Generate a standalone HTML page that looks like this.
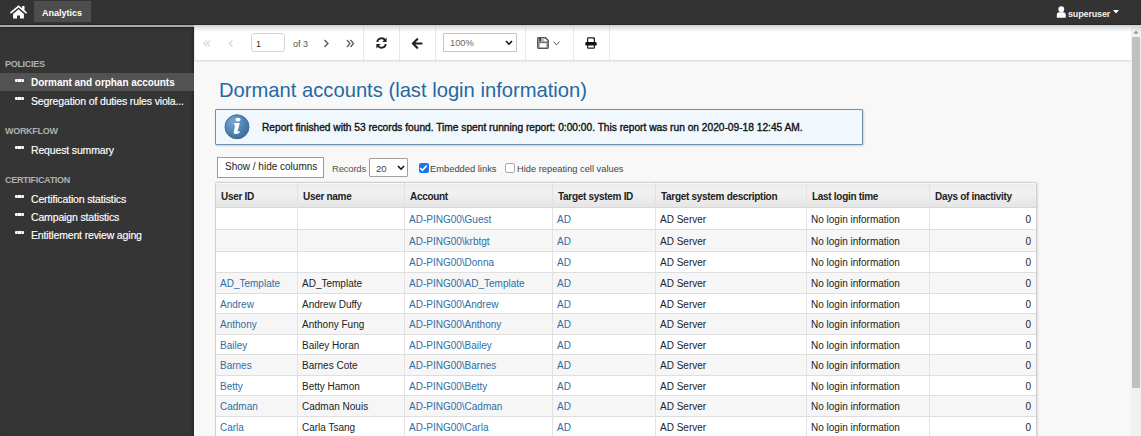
<!DOCTYPE html>
<html><head><meta charset="utf-8">
<style>
*{box-sizing:border-box;margin:0;padding:0}
html,body{width:1141px;height:436px;overflow:hidden;font-family:"Liberation Sans",sans-serif;background:#f8f8f8;position:relative}
div{position:absolute;white-space:nowrap}
#hdr{left:0;top:0;width:1141px;height:25px;background:#333;box-shadow:inset 0 -1px 1px #262626;z-index:5}
#hshadow{left:194px;top:25px;width:947px;height:7px;background:linear-gradient(rgba(0,0,0,.16),rgba(0,0,0,0));z-index:6}
#home{position:absolute;left:10px;top:5px}
#tab{left:34px;top:1px;width:57px;height:21px;background:#4d4d4d;color:#fff;font-weight:bold;font-size:9px;line-height:24px;padding-left:8px}
#user{left:1068px;top:2px;height:25px;line-height:25px;color:#f0f0f0;font-size:9px;letter-spacing:-0.15px;font-weight:bold}
#side{left:0;top:25px;width:194px;height:411px;background:#353535;border-top:2px solid #a9a9a9;z-index:4}
#sidein{left:0;top:0;width:194px;height:409px;box-shadow:inset 0 1px 1px #262626, inset -2px 0 2px rgba(0,0,0,.18)}
.sh{left:5px;color:#b0b0b0;font-weight:bold;font-size:9px;letter-spacing:-0.3px;line-height:10px;margin-top:-1px;z-index:5}
.si{left:0;width:194px;height:18px;color:#fff;font-size:10.5px;letter-spacing:-0.15px;-webkit-text-stroke:0.15px #fff;z-index:5}
.si span{position:absolute;left:31px;top:1px;line-height:18px}
.si.sel{background:#525252}
.si.sel span{font-weight:bold;font-size:10px;letter-spacing:-0.05px;-webkit-text-stroke:0}
.si i{position:absolute;left:14.5px;top:6px;width:9.5px;height:3px;border-radius:1px;background:repeating-linear-gradient(90deg,#fff 0 2.4px,#c8c0d0 2.4px 3.4px)}
#tb{left:194px;top:27px;width:937px;height:34px;background:#fff;border-bottom:1px solid #e0e0e0;border-left:1px solid #e6e6e6;box-shadow:0 1px 1px rgba(0,0,0,.05)}
.dv{top:27px;width:1px;height:33px;background:#e8e8e8}
#title{left:219px;top:78px;font-size:20.2px;line-height:24px;color:#1f6aa5}
#info{left:215px;top:109px;width:648px;height:36px;background:#f0f7fd;border:1px solid #6e8fae;border-radius:1px;box-shadow:1px 1px 2px rgba(0,0,0,.18)}
#itxt{left:262px;top:121px;font-size:10.2px;line-height:13px;color:#111;-webkit-text-stroke:0.35px #111}
#btn{left:217px;top:157px;width:107px;height:21px;background:#fff;border:1px solid #9a9a9a;font-size:10px;line-height:17px;padding-left:7px;color:#222}
#rec{left:332px;top:162px;font-size:9.5px;letter-spacing:-0.2px;line-height:13px;color:#555}
#rsel{left:369px;top:158px;width:39px;height:19px;background:#fff;border:1px solid #a0a0a0;border-radius:1px;font-size:9.6px;line-height:20px;padding-left:6px;color:#444}
.cb{top:163px;width:10px;height:10px;border-radius:2px}
#cb1{left:418.5px;background:#1a76f0}
#cb2{left:505px;background:#fff;border:1px solid #a8a8a8}
#emb{left:430px;top:163px;font-size:9.35px;line-height:13px;color:#444}
#hide{left:517px;top:163px;font-size:9.3px;line-height:13px;color:#444}
#tbg{background:#fff;border:1px solid #d0d0d0;border-radius:2px 2px 0 0;box-shadow:1px 0 2px rgba(0,0,0,.12)}
#thd{background:linear-gradient(#ececec,#f1f1f1 40%,#e5e5e5);border-top:1px solid #fafafa}
.stripe{background:#f6f6f6}
.hl{height:1px;background:#dedede}
.hl.hb{background:#d6d6d6}
.vl{width:1px;background:#e2e2e2}
.th{font-size:10px;letter-spacing:-0.3px;font-weight:bold;color:#222;margin-top:2px}
.td{font-size:10px;color:#222;margin-top:1px}
.td.lk{color:#2f6da6}
#sb{left:1131px;top:27px;width:10px;height:409px;background:#f1f1f1}
#sbt{left:1px;top:10px;width:8px;height:351px;background:#c0c0c0}
.ic{position:absolute}
#pin{left:251px;top:33px;width:34px;height:19px;border:1px solid #d4d4d4;border-radius:3px;background:#fff;font-size:9px;line-height:20px;padding-left:4px;color:#333}
#of3{left:293px;top:38px;font-size:9px;line-height:12px;color:#555}
#zsel{left:443px;top:33px;width:74px;height:19px;border:1px solid #c6c6c6;border-radius:1px;background:#fff;font-size:9.3px;line-height:19px;padding-left:6px;color:#666}
</style></head><body>
<div id="hdr">
  <svg id="home" width="17" height="14" viewBox="0 0 17 14"><path d="M1 7.6 L8.5 1.4 L16 7.6" stroke="#fff" stroke-width="1.7" stroke-linecap="round" stroke-linejoin="miter" fill="none"/><rect x="12.1" y="1" width="2.4" height="4.4" fill="#fff"/><path d="M3.1 8.9 L8.5 4.3 L13.9 8.9 V13.6 H10 V10.4 H7 V13.6 H3.1 Z" fill="#fff"/></svg>
  <div id="tab">Analytics</div>
  <svg class="ic" style="left:1056px;top:6px" width="11" height="12" viewBox="0 0 11 12"><ellipse cx="5.3" cy="3.3" rx="2.9" ry="3" fill="#fff"/><path d="M0.8 11.3 V9.2 Q0.8 6.3 3.2 6.3 H7.4 Q9.8 6.3 9.8 9.2 V11.3 Q9.8 11.8 9.3 11.8 H1.3 Q0.8 11.8 0.8 11.3 Z" fill="#fff"/></svg>
  <div id="user">superuser</div>
  <svg class="ic" style="left:1113px;top:10px" width="6" height="4" viewBox="0 0 6 4"><path d="M0 0 H6 L3 3.5 Z" fill="#fff"/></svg>
</div>
<div id="side"><div id="sidein"></div>
<div class="sh" style="top:33px">POLICIES</div>
<div class="si sel" style="top:46px"><i></i><span>Dormant and orphan accounts</span></div>
<div class="si" style="top:64px"><i></i><span>Segregation of duties rules viola...</span></div>
<div class="sh" style="top:100px">WORKFLOW</div>
<div class="si" style="top:113px"><i></i><span>Request summary</span></div>
<div class="sh" style="top:149px">CERTIFICATION</div>
<div class="si" style="top:162px"><i></i><span>Certification statistics</span></div>
<div class="si" style="top:180px"><i></i><span>Campaign statistics</span></div>
<div class="si" style="top:198px"><i></i><span>Entitlement review aging</span></div>
</div>
<div id="tb"></div>
<div class="dv" style="left:363px"></div>
<div class="dv" style="left:399px"></div>
<div class="dv" style="left:435px"></div>
<div class="dv" style="left:525px"></div>
<div class="dv" style="left:573px"></div>
<div class="dv" style="left:609px"></div>
<div id="hshadow"></div>
<!-- toolbar icons -->
<svg class="ic" style="left:203px;top:40px" width="8" height="7" viewBox="0 0 8 7"><path d="M3.6 0.6 L0.8 3.5 L3.6 6.4 M6.8 0.6 L4 3.5 L6.8 6.4" stroke="#d6d6d6" stroke-width="1.3" fill="none"/></svg>
<svg class="ic" style="left:228px;top:40px" width="6" height="7" viewBox="0 0 6 7"><path d="M4.5 0.5 L1.3 3.5 L4.5 6.5" stroke="#d6d6d6" stroke-width="1.3" fill="none"/></svg>
<div id="pin">1</div>
<div id="of3">of 3</div>
<svg class="ic" style="left:323px;top:39px" width="7" height="9" viewBox="0 0 7 9"><path d="M1.5 1 L5 4.5 L1.5 8" stroke="#555" stroke-width="1.3" fill="none"/></svg>
<svg class="ic" style="left:346px;top:39px" width="9" height="9" viewBox="0 0 9 9"><path d="M1 1 L4 4.5 L1 8 M4.5 1 L7.5 4.5 L4.5 8" stroke="#555" stroke-width="1.2" fill="none"/></svg>
<svg class="ic" style="left:375px;top:37px" width="13" height="12" viewBox="0 0 13 12"><path d="M2.2 5 A4.4 4.4 0 0 1 10.2 3.2" stroke="#222" stroke-width="1.8" fill="none"/><path d="M11.6 0.6 V5 H7.2 Z" fill="#222"/><path d="M10.8 7 A4.4 4.4 0 0 1 2.8 8.8" stroke="#222" stroke-width="1.8" fill="none"/><path d="M1.4 11.4 V7 H5.8 Z" fill="#222"/></svg>
<svg class="ic" style="left:411px;top:38px" width="12" height="11" viewBox="0 0 12 11"><path d="M10.6 5.5 H2.6 M6.2 1.2 L1.9 5.5 L6.2 9.8" stroke="#222" stroke-width="2.2" fill="none" stroke-linecap="round" stroke-linejoin="round"/></svg>
<div id="zsel">100%</div>
<svg class="ic" style="left:505px;top:40px" width="8" height="6" viewBox="0 0 8 6"><path d="M1 1 L4 4.2 L7 1" stroke="#111" stroke-width="1.6" fill="none"/></svg>
<svg class="ic" style="left:537px;top:37px" width="12" height="12" viewBox="0 0 12 12"><path d="M1.4 0.8 H8.5 L11.2 3.5 V10.6 Q11.2 11.2 10.6 11.2 H1.4 Q0.8 11.2 0.8 10.6 V1.4 Q0.8 0.8 1.4 0.8 Z" stroke="#555" stroke-width="1.5" fill="none"/><rect x="2.2" y="1" width="2.2" height="3.4" fill="#333"/><rect x="4.4" y="1" width="2.6" height="3.4" fill="#bbb"/><rect x="1" y="4.4" width="10" height="1.8" fill="#777"/><rect x="1" y="6.2" width="1.6" height="4.6" fill="#888"/><rect x="9.4" y="6.2" width="1.6" height="4.6" fill="#888"/></svg>
<svg class="ic" style="left:553px;top:41px" width="7" height="5" viewBox="0 0 7 5"><path d="M0.5 0.6 L3.5 3.8 L6.5 0.6" stroke="#555" stroke-width="1" fill="none"/></svg>
<svg class="ic" style="left:585px;top:37px" width="12" height="12" viewBox="0 0 12 12"><path d="M2.6 5 V1.4 Q2.6 0.8 3.2 0.8 H8.2 L9.4 2 V5" stroke="#222" stroke-width="1.2" fill="none"/><path d="M8 0.6 L9.7 2.3 V0.6 Z" fill="#111"/><path d="M0.4 6.2 Q0.4 5 1.6 5 H10.4 Q11.6 5 11.6 6.2 V8.4 H0.4 Z" fill="#111"/><path d="M2.6 8 V10.6 Q2.6 11.2 3.2 11.2 H8.8 Q9.4 11.2 9.4 10.6 V8" stroke="#222" stroke-width="1.2" fill="none"/></svg>

<div id="title">Dormant accounts (last login information)</div>
<div id="info"></div>
<svg class="ic" style="left:224px;top:114px" width="26" height="26" viewBox="0 0 26 26"><defs><radialGradient id="ig" cx="35%" cy="30%" r="75%"><stop offset="0" stop-color="#79a8d2"/><stop offset="0.6" stop-color="#4f82b3"/><stop offset="1" stop-color="#3a6c9c"/></radialGradient></defs><circle cx="13" cy="12.8" r="12" fill="url(#ig)" stroke="#3f6a94" stroke-width="1"/><ellipse cx="14" cy="5.6" rx="2.5" ry="1.9" fill="#fff"/><path d="M10.4 9 H15.8 L13.7 16.9 Q13.4 18 14.5 17.6 L16 16.9 L15.4 18.9 Q13.5 20 11.3 19.9 Q9.2 19.7 9.8 17.4 L11.2 11.3 H10 Z" fill="#fff"/></svg>
<div id="itxt">Report finished with 53 records found. Time spent running report: 0:00:00. This report was run on 2020-09-18 12:45 AM.</div>

<div id="btn">Show / hide columns</div>
<div id="rec">Records</div>
<div id="rsel">20</div>
<svg class="ic" style="left:397px;top:165px" width="8" height="6" viewBox="0 0 8 6"><path d="M1 1 L4 4.2 L7 1" stroke="#111" stroke-width="1.6" fill="none"/></svg>
<div class="cb" id="cb1"></div>
<svg class="ic" style="left:419px;top:164px" width="9" height="8" viewBox="0 0 9 8"><path d="M1.2 4 L3.5 6.3 L7.8 1.5" stroke="#fff" stroke-width="1.5" fill="none"/></svg>
<div id="emb">Embedded links</div>
<div class="cb" id="cb2"></div>
<div id="hide">Hide repeating cell values</div>

<div id="tbg" style="left:215px;top:182px;width:822px;height:278px"></div>
<div id="thd" style="left:216px;top:183px;width:820px;height:24px"></div>
<div class="stripe" style="left:216px;top:230px;width:820px;height:21px"></div>
<div class="stripe" style="left:216px;top:273px;width:820px;height:20px"></div>
<div class="stripe" style="left:216px;top:314px;width:820px;height:20px"></div>
<div class="stripe" style="left:216px;top:355px;width:820px;height:20px"></div>
<div class="stripe" style="left:216px;top:396px;width:820px;height:20px"></div>
<div class="stripe" style="left:216px;top:437px;width:820px;height:20px"></div>
<div class="hl hb" style="left:216px;top:207px;width:820px"></div>
<div class="hl" style="left:216px;top:229px;width:820px"></div>
<div class="hl" style="left:216px;top:251px;width:820px"></div>
<div class="hl" style="left:216px;top:272px;width:820px"></div>
<div class="hl" style="left:216px;top:293px;width:820px"></div>
<div class="hl" style="left:216px;top:313px;width:820px"></div>
<div class="hl" style="left:216px;top:334px;width:820px"></div>
<div class="hl" style="left:216px;top:354px;width:820px"></div>
<div class="hl" style="left:216px;top:375px;width:820px"></div>
<div class="hl" style="left:216px;top:395px;width:820px"></div>
<div class="hl" style="left:216px;top:416px;width:820px"></div>
<div class="hl" style="left:216px;top:436px;width:820px"></div>
<div class="vl" style="left:297px;top:183px;height:278px"></div>
<div class="vl" style="left:404px;top:183px;height:278px"></div>
<div class="vl" style="left:552px;top:183px;height:278px"></div>
<div class="vl" style="left:655px;top:183px;height:278px"></div>
<div class="vl" style="left:806px;top:183px;height:278px"></div>
<div class="vl" style="left:929px;top:183px;height:278px"></div>
<div class="th" style="left:221px;top:183px;height:24px;line-height:24px">User ID</div>
<div class="th" style="left:303px;top:183px;height:24px;line-height:24px">User name</div>
<div class="th" style="left:410px;top:183px;height:24px;line-height:24px">Account</div>
<div class="th" style="left:558px;top:183px;height:24px;line-height:24px">Target system ID</div>
<div class="th" style="left:661px;top:183px;height:24px;line-height:24px">Target system description</div>
<div class="th" style="left:812px;top:183px;height:24px;line-height:24px">Last login time</div>
<div class="th" style="left:935px;top:183px;height:24px;line-height:24px">Days of inactivity</div>
<div class="td lk" style="left:409px;top:208px;height:21px;line-height:21px">AD-PING00\Guest</div>
<div class="td lk" style="left:557px;top:208px;height:21px;line-height:21px">AD</div>
<div class="td" style="left:660px;top:208px;height:21px;line-height:21px">AD Server</div>
<div class="td" style="left:811px;top:208px;height:21px;line-height:21px">No login information</div>
<div class="td" style="right:110px;top:208px;height:21px;line-height:21px">0</div>
<div class="td lk" style="left:409px;top:230px;height:21px;line-height:21px">AD-PING00\krbtgt</div>
<div class="td lk" style="left:557px;top:230px;height:21px;line-height:21px">AD</div>
<div class="td" style="left:660px;top:230px;height:21px;line-height:21px">AD Server</div>
<div class="td" style="left:811px;top:230px;height:21px;line-height:21px">No login information</div>
<div class="td" style="right:110px;top:230px;height:21px;line-height:21px">0</div>
<div class="td lk" style="left:409px;top:252px;height:20px;line-height:20px">AD-PING00\Donna</div>
<div class="td lk" style="left:557px;top:252px;height:20px;line-height:20px">AD</div>
<div class="td" style="left:660px;top:252px;height:20px;line-height:20px">AD Server</div>
<div class="td" style="left:811px;top:252px;height:20px;line-height:20px">No login information</div>
<div class="td" style="right:110px;top:252px;height:20px;line-height:20px">0</div>
<div class="td lk" style="left:220px;top:273px;height:20px;line-height:20px">AD_Template</div>
<div class="td" style="left:302px;top:273px;height:20px;line-height:20px">AD_Template</div>
<div class="td lk" style="left:409px;top:273px;height:20px;line-height:20px">AD-PING00\AD_Template</div>
<div class="td lk" style="left:557px;top:273px;height:20px;line-height:20px">AD</div>
<div class="td" style="left:660px;top:273px;height:20px;line-height:20px">AD Server</div>
<div class="td" style="left:811px;top:273px;height:20px;line-height:20px">No login information</div>
<div class="td" style="right:110px;top:273px;height:20px;line-height:20px">0</div>
<div class="td lk" style="left:220px;top:294px;height:19px;line-height:19px">Andrew</div>
<div class="td" style="left:302px;top:294px;height:19px;line-height:19px">Andrew Duffy</div>
<div class="td lk" style="left:409px;top:294px;height:19px;line-height:19px">AD-PING00\Andrew</div>
<div class="td lk" style="left:557px;top:294px;height:19px;line-height:19px">AD</div>
<div class="td" style="left:660px;top:294px;height:19px;line-height:19px">AD Server</div>
<div class="td" style="left:811px;top:294px;height:19px;line-height:19px">No login information</div>
<div class="td" style="right:110px;top:294px;height:19px;line-height:19px">0</div>
<div class="td lk" style="left:220px;top:314px;height:20px;line-height:20px">Anthony</div>
<div class="td" style="left:302px;top:314px;height:20px;line-height:20px">Anthony Fung</div>
<div class="td lk" style="left:409px;top:314px;height:20px;line-height:20px">AD-PING00\Anthony</div>
<div class="td lk" style="left:557px;top:314px;height:20px;line-height:20px">AD</div>
<div class="td" style="left:660px;top:314px;height:20px;line-height:20px">AD Server</div>
<div class="td" style="left:811px;top:314px;height:20px;line-height:20px">No login information</div>
<div class="td" style="right:110px;top:314px;height:20px;line-height:20px">0</div>
<div class="td lk" style="left:220px;top:335px;height:19px;line-height:19px">Bailey</div>
<div class="td" style="left:302px;top:335px;height:19px;line-height:19px">Bailey Horan</div>
<div class="td lk" style="left:409px;top:335px;height:19px;line-height:19px">AD-PING00\Bailey</div>
<div class="td lk" style="left:557px;top:335px;height:19px;line-height:19px">AD</div>
<div class="td" style="left:660px;top:335px;height:19px;line-height:19px">AD Server</div>
<div class="td" style="left:811px;top:335px;height:19px;line-height:19px">No login information</div>
<div class="td" style="right:110px;top:335px;height:19px;line-height:19px">0</div>
<div class="td lk" style="left:220px;top:355px;height:20px;line-height:20px">Barnes</div>
<div class="td" style="left:302px;top:355px;height:20px;line-height:20px">Barnes Cote</div>
<div class="td lk" style="left:409px;top:355px;height:20px;line-height:20px">AD-PING00\Barnes</div>
<div class="td lk" style="left:557px;top:355px;height:20px;line-height:20px">AD</div>
<div class="td" style="left:660px;top:355px;height:20px;line-height:20px">AD Server</div>
<div class="td" style="left:811px;top:355px;height:20px;line-height:20px">No login information</div>
<div class="td" style="right:110px;top:355px;height:20px;line-height:20px">0</div>
<div class="td lk" style="left:220px;top:376px;height:19px;line-height:19px">Betty</div>
<div class="td" style="left:302px;top:376px;height:19px;line-height:19px">Betty Hamon</div>
<div class="td lk" style="left:409px;top:376px;height:19px;line-height:19px">AD-PING00\Betty</div>
<div class="td lk" style="left:557px;top:376px;height:19px;line-height:19px">AD</div>
<div class="td" style="left:660px;top:376px;height:19px;line-height:19px">AD Server</div>
<div class="td" style="left:811px;top:376px;height:19px;line-height:19px">No login information</div>
<div class="td" style="right:110px;top:376px;height:19px;line-height:19px">0</div>
<div class="td lk" style="left:220px;top:396px;height:20px;line-height:20px">Cadman</div>
<div class="td" style="left:302px;top:396px;height:20px;line-height:20px">Cadman Nouis</div>
<div class="td lk" style="left:409px;top:396px;height:20px;line-height:20px">AD-PING00\Cadman</div>
<div class="td lk" style="left:557px;top:396px;height:20px;line-height:20px">AD</div>
<div class="td" style="left:660px;top:396px;height:20px;line-height:20px">AD Server</div>
<div class="td" style="left:811px;top:396px;height:20px;line-height:20px">No login information</div>
<div class="td" style="right:110px;top:396px;height:20px;line-height:20px">0</div>
<div class="td lk" style="left:220px;top:417px;height:19px;line-height:19px">Carla</div>
<div class="td" style="left:302px;top:417px;height:19px;line-height:19px">Carla Tsang</div>
<div class="td lk" style="left:409px;top:417px;height:19px;line-height:19px">AD-PING00\Carla</div>
<div class="td lk" style="left:557px;top:417px;height:19px;line-height:19px">AD</div>
<div class="td" style="left:660px;top:417px;height:19px;line-height:19px">AD Server</div>
<div class="td" style="left:811px;top:417px;height:19px;line-height:19px">No login information</div>
<div class="td" style="right:110px;top:417px;height:19px;line-height:19px">0</div>
<div class="td lk" style="left:220px;top:437px;height:20px;line-height:20px">Cody</div>
<div class="td" style="left:302px;top:437px;height:20px;line-height:20px">Cody Smith</div>
<div class="td lk" style="left:409px;top:437px;height:20px;line-height:20px">AD-PING00\Cody</div>
<div class="td lk" style="left:557px;top:437px;height:20px;line-height:20px">AD</div>
<div class="td" style="left:660px;top:437px;height:20px;line-height:20px">AD Server</div>
<div class="td" style="left:811px;top:437px;height:20px;line-height:20px">No login information</div>
<div class="td" style="right:110px;top:437px;height:20px;line-height:20px">0</div>
<div id="sb"><div id="sbt"></div></div>
<svg class="ic" style="left:1133px;top:30px" width="6" height="4" viewBox="0 0 6 4"><path d="M0.5 3.5 L3 0.8 L5.5 3.5 Z" fill="#888"/></svg>
</body></html>
